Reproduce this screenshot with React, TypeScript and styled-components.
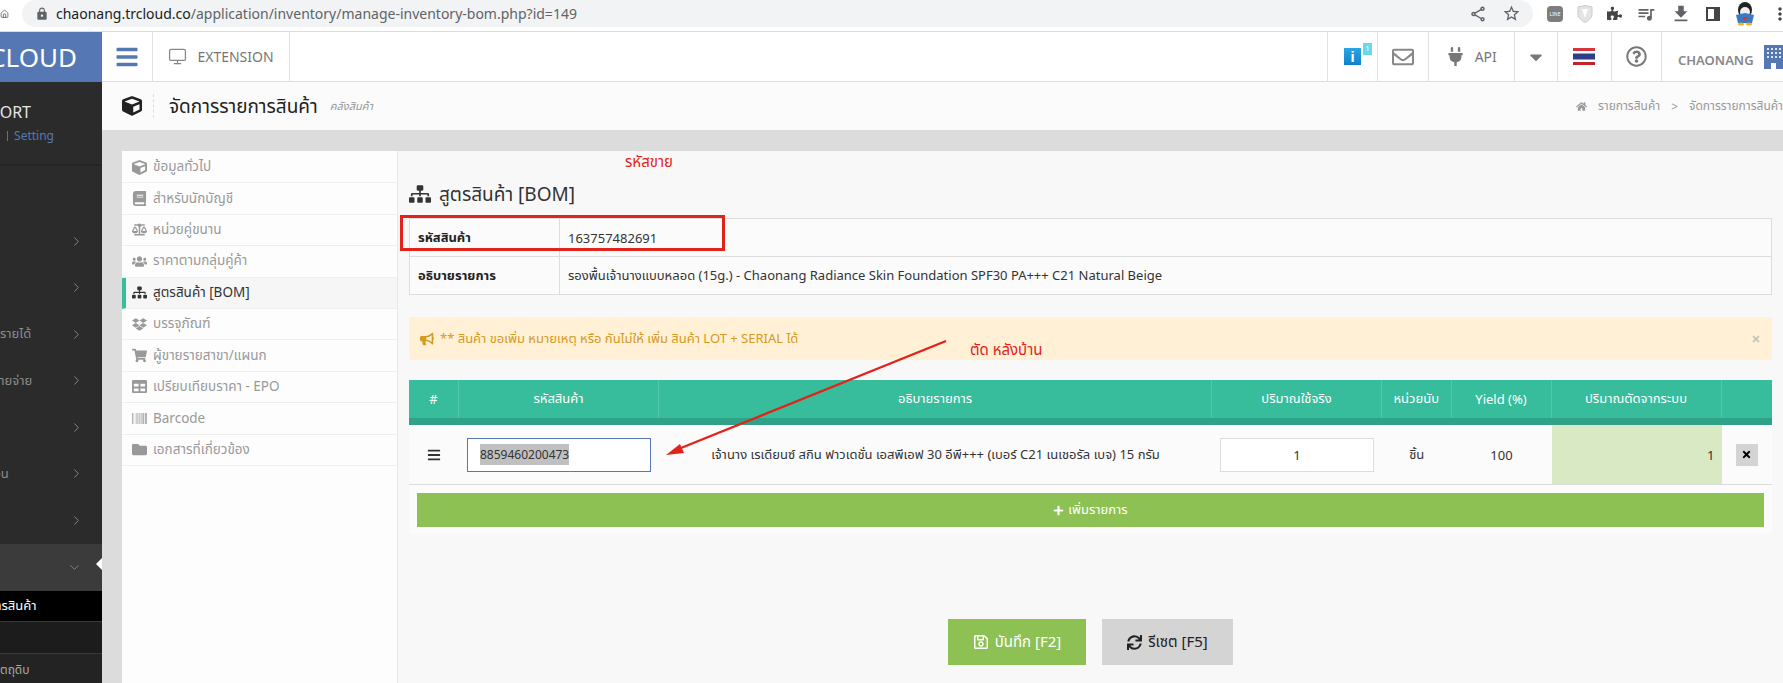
import React from "react";
import styled, { createGlobalStyle } from "styled-components";
import {
  FaBalanceScale,
  FaBarcode,
  FaBars,
  FaBook,
  FaBullhorn,
  FaCube,
  FaDropbox,
  FaFolder,
  FaHome,
  FaPlug,
  FaPlus,
  FaPuzzlePiece,
  FaShoppingCart,
  FaSitemap,
  FaSync,
  FaTable,
  FaTimes,
  FaUsers,
  FaCaretDown,
  FaRegEnvelope,
  FaRegQuestionCircle,
  FaRegSave,
} from "react-icons/fa";
import {
  MdFileDownload,
  MdLock,
  MdMoreVert,
  MdOutlineShare,
  MdQueueMusic,
  MdStarBorder,
} from "react-icons/md";
import { ChevronDown, ChevronRight, Home, Monitor } from "lucide-react";

const font = `"Noto Sans", "Noto Sans Thai", "Open Sans", sans-serif`;

const GlobalStyle = createGlobalStyle`
  html, body { margin: 0; padding: 0; background: #f8f8f8; }
  body { font-family: ${font}; color: #333; }
  * { box-sizing: border-box; }
`;

const navItems = [
  { icon: <FaCube />, label: "ข้อมูลทั่วไป" },
  { icon: <FaBook />, label: "สำหรับนักบัญชี" },
  { icon: <FaBalanceScale />, label: "หน่วยคู่ขนาน" },
  { icon: <FaUsers />, label: "ราคาตามกลุ่มคู่ค้า" },
  { icon: <FaSitemap />, label: "สูตรสินค้า [BOM]", active: true },
  { icon: <FaDropbox />, label: "บรรจุภัณฑ์" },
  { icon: <FaShoppingCart />, label: "ผู้ขายรายสาขา/แผนก" },
  { icon: <FaTable />, label: "เปรียบเทียบราคา - EPO" },
  { icon: <FaBarcode />, label: "Barcode" },
  { icon: <FaFolder />, label: "เอกสารที่เกี่ยวข้อง" },
];

const sideRows = [
  { label: "ข้อมูล", shift: -33 },
  { label: "", shift: 0 },
  { label: "รายได้", shift: 0 },
  { label: "รายจ่าย", shift: -7 },
  { label: "", shift: 0 },
  { label: "การเงิน", shift: -29 },
  { label: "", shift: 0 },
];

const headers = ["#", "รหัสสินค้า", "อธิบายรายการ", "ปริมาณใช้จริง", "หน่วยนับ", "Yield (%)", "ปริมาณตัดจากระบบ", ""];

const App = () => {
  return (
    <Page>
      <GlobalStyle />
      <ChromeBar>
        <HomeSlice>
          <Home size={20} strokeWidth={1.8} />
        </HomeSlice>
        <AddressPill>
          <MdLock size={14} color="#5f6368" />
          <Url>
            <strong>chaonang.trcloud.co</strong>/application/inventory/manage-inventory-bom.php?id=149
          </Url>
          <PillIcons>
            <MdOutlineShare size={18} />
            <MdStarBorder size={19} />
          </PillIcons>
        </AddressPill>
        <Extensions>
          <LineBadge>LINE</LineBadge>
          <svg width="16" height="18" viewBox="0 0 16 18">
            <path d="M1 2 L8 0.5 L15 2 V9 C15 13 11 16 8 17.5 C5 16 1 13 1 9 Z" fill="#e4e4e4" stroke="#c9c9c9" />
            <path d="M5 4 H11 L8 13 Z" fill="#fff" />
          </svg>
          <FaPuzzlePiece size={15} color="#444" />
          <MdQueueMusic size={20} color="#5f6368" />
          <MdFileDownload size={22} color="#5f6368" />
          <PanelIcon />
          <svg width="22" height="24" viewBox="0 0 22 24">
            <ellipse cx="11" cy="8" rx="7" ry="8" fill="#222" />
            <ellipse cx="11" cy="10" rx="5" ry="5" fill="#eee" />
            <path d="M2 13 L11 11 L20 13 L18 21 H4 Z" fill="#3a79c4" />
            <path d="M8 15 H14 L11 19 Z" fill="#d8382c" />
            <ellipse cx="7" cy="22" rx="3" ry="1.6" fill="#f2b01e" />
            <ellipse cx="15" cy="22" rx="3" ry="1.6" fill="#f2b01e" />
          </svg>
          <MdMoreVert size={20} color="#444" />
        </Extensions>
      </ChromeBar>

      <Body>
        <Sidebar>
          <Logo>
            <span>TRCLOUD</span>
          </Logo>
          <Profile>
            <CompanyName>SUPPORT</CompanyName>
            <SettingLine>
              <i />
              Setting
            </SettingLine>
          </Profile>
          <SideMenu>
            {sideRows.map((row, i) => (
              <SideRow key={i}>
                <SideLabel $shift={row.shift}>{row.label}</SideLabel>
                <ChevronRight size={15} strokeWidth={1.5} />
              </SideRow>
            ))}
            <SideActive>
              <ChevronDown size={15} strokeWidth={1.5} />
              <Notch />
            </SideActive>
            <SubRow $bg="#000" $color="#fff" $h={31}>
              <SideLabel $shift={-31}>รายการสินค้า</SideLabel>
            </SubRow>
            <SubRow $bg="#1c1c1c" $color="#aaa" $h={32} />
            <SubRow $bg="#232323" $color="#aaa" $h={33}>
              <SmallLabel>ตถุดิบ</SmallLabel>
            </SubRow>
          </SideMenu>
        </Sidebar>

        <MainColumn>
          <TopBar>
            <TopCell $w={51}>
              <FaBars size={24} color="#5578b4" />
            </TopCell>
            <TopCell $w={137}>
              <Monitor size={19} color="#888" strokeWidth={1.6} />
              <TopText>EXTENSION</TopText>
            </TopCell>
            <TopSpacer />
            <TopCell $w={50}>
              <InfoIcon>i</InfoIcon>
              <InfoBadge>1</InfoBadge>
            </TopCell>
            <TopCell $w={51}>
              <FaRegEnvelope size={22} color="#888" />
            </TopCell>
            <TopCell $w={85.5}>
              <FaPlug size={19} color="#777" />
              <TopText>API</TopText>
            </TopCell>
            <TopCell $w={43}>
              <FaCaretDown size={20} color="#777" />
            </TopCell>
            <TopCell $w={54.5}>
              <svg width="22" height="17" viewBox="0 0 22 17">
                <rect width="22" height="17" fill="#fff" />
                <rect width="22" height="3" fill="#d8363f" />
                <rect y="5.5" width="22" height="6" fill="#2d3f86" />
                <rect y="14" width="22" height="3" fill="#c1242c" />
              </svg>
            </TopCell>
            <TopCell $w={50}>
              <FaRegQuestionCircle size={21} color="#777" />
            </TopCell>
            <UserCell>
              <UserName>CHAONANG</UserName>
              <BuildingIcon>
                <svg width="24" height="24" viewBox="0 0 24 24">
                  <rect width="24" height="24" fill="#5578b4" />
                  {[4, 8, 12, 16, 20].map((x) =>
                    [3, 7, 11].map((y) => <rect key={`${x}-${y}`} x={x - 1} y={y} width="2" height="2" fill="#dde6f4" />)
                  )}
                  <rect x="7" y="18" width="5" height="6" fill="#fff" />
                </svg>
              </BuildingIcon>
            </UserCell>
          </TopBar>

          <SubHeader>
            <FaCube size={20} color="#222" />
            <PageTitle>จัดการรายการสินค้า</PageTitle>
            <PageSub>คลังสินค้า</PageSub>
            <Crumbs>
              <FaHome size={11} />
              <span>รายการสินค้า</span>
              <span>&gt;</span>
              <span>จัดการรายการสินค้า</span>
            </Crumbs>
          </SubHeader>

          <Band />

          <Workspace>
            <SideTabs>
              {navItems.map((item) => (
                <TabRow key={item.label} $active={item.active}>
                  {item.icon}
                  <span>{item.label}</span>
                </TabRow>
              ))}
            </SideTabs>

            <Content>
              <SectionTitle>
                <FaSitemap size={22} />
                สูตรสินค้า [BOM]
              </SectionTitle>

              <InfoTable>
                <InfoHead>รหัสสินค้า</InfoHead>
                <InfoValue>163757482691</InfoValue>
                <InfoHead>อธิบายรายการ</InfoHead>
                <InfoValue>รองพื้นเจ้านางแบบหลอด (15g.) - Chaonang Radiance Skin Foundation SPF30 PA+++ C21 Natural Beige</InfoValue>
              </InfoTable>

              <Alert>
                <FaBullhorn size={14} />
                <span>** สินค้า ขอเพิ่ม หมายเหตุ หรือ กันไม่ให้ เพิ่ม สินค้า LOT + SERIAL ได้</span>
                <AlertClose>
                  <FaTimes size={10} />
                </AlertClose>
              </Alert>

              <BomHead>
                {headers.map((h, i) => (
                  <HeadCell key={i}>{h}</HeadCell>
                ))}
              </BomHead>
              <BomPanel>
                <BomRow>
                  <BodyCell>
                    <FaBars size={14} color="#333" />
                  </BodyCell>
                  <BodyCell>
                    <CodeInput>
                      <mark>8859460200473</mark>
                    </CodeInput>
                  </BodyCell>
                  <DescCell>เจ้านาง เรเดียนซ์ สกิน ฟาวเดชั่น เอสพีเอฟ 30 อีพี+++ (เบอร์ C21 เนเชอรัล เบจ) 15 กรัม</DescCell>
                  <BodyCell>
                    <QtyInput>1</QtyInput>
                  </BodyCell>
                  <BodyCell>ชิ้น</BodyCell>
                  <BodyCell>100</BodyCell>
                  <DeductCell>1</DeductCell>
                  <BodyCell>
                    <RemoveButton>
                      <FaTimes size={11} />
                    </RemoveButton>
                  </BodyCell>
                </BomRow>
                <AddRow>
                  <FaPlus size={11} />
                  เพิ่มรายการ
                </AddRow>
              </BomPanel>

              <Actions>
                <ActionButton $bg="#8dc153" $color="#fff" $w={138}>
                  <FaRegSave size={16} />
                  บันทึก [F2]
                </ActionButton>
                <ActionButton $bg="#d4d4d4" $color="#222" $w={131}>
                  <FaSync size={15} />
                  รีเซต [F5]
                </ActionButton>
              </Actions>
            </Content>
          </Workspace>
        </MainColumn>
      </Body>

      <Markup viewBox="0 0 1783 683" width="1783" height="683">
        <rect x="401.5" y="216.5" width="322" height="33" fill="none" stroke="#e2231a" strokeWidth="3" />
        <line x1="946" y1="341" x2="676" y2="450" stroke="#e2231a" strokeWidth="2.4" />
        <polygon points="666,455 680,444 684,453" fill="#e2231a" />
      </Markup>
      <RedNote $x={625} $y={150}>รหัสขาย</RedNote>
      <RedNote $x={970} $y={338}>ตัด หลังบ้าน</RedNote>
    </Page>
  );
};

export default App;

const Page = styled.div`
  position: relative;
  width: 1783px;
  height: 683px;
  overflow: hidden;
  display: flex;
  flex-direction: column;
`;

const ChromeBar = styled.div`
  height: 32px;
  flex: none;
  display: flex;
  background: #fff;
  border-bottom: 1px solid #dadce0;
`;

const HomeSlice = styled.div`
  width: 22px;
  display: flex;
  align-items: flex-start;
  justify-content: flex-end;
  padding: 4px 13px 0 0;
  color: #444;
`;

const AddressPill = styled.div`
  width: 1511px;
  height: 27px;
  background: #f1f3f4;
  border-radius: 0 14px 14px 14px;
  border-top-left-radius: 14px;
  margin-top: 0;
  display: flex;
  align-items: center;
  padding: 0 12px 0 13px;
`;

const Url = styled.div`
  margin-left: 7px;
  font-size: 14px;
  color: #5f6368;
  white-space: nowrap;

  strong {
    color: #202124;
    font-weight: 400;
  }
`;

const PillIcons = styled.div`
  margin-left: auto;
  display: flex;
  align-items: center;
  gap: 15px;
  color: #5f6368;
`;

const Extensions = styled.div`
  flex: 1;
  height: 27px;
  display: flex;
  align-items: center;
  justify-content: space-between;
  padding: 0 0 0 14px;
  margin-right: -7px;
`;

const LineBadge = styled.div`
  width: 16px;
  height: 16px;
  border-radius: 4px;
  background: #7d7d7d;
  color: #fff;
  font-size: 5px;
  display: flex;
  align-items: center;
  justify-content: center;
`;

const PanelIcon = styled.div`
  width: 14px;
  height: 14px;
  border: 2px solid #444;
  border-right-width: 6px;
`;

const Body = styled.div`
  flex: 1;
  display: flex;
  min-height: 0;
`;

const Sidebar = styled.aside`
  width: 102px;
  flex: none;
  background: #2b2b2b;
  overflow: hidden;
  display: flex;
  flex-direction: column;
`;

const Logo = styled.div`
  height: 50px;
  flex: none;
  background: #5578b4;
  color: #fff;
  font-size: 26px;
  display: flex;
  align-items: center;
  justify-content: flex-end;
  padding-right: 25px;
  white-space: nowrap;
`;

const Profile = styled.div`
  height: 84px;
  flex: none;
  border-bottom: 2px solid #252525;
  display: flex;
  flex-direction: column;
  align-items: flex-end;
  padding: 19px 71px 0 0;
  white-space: nowrap;
`;

const CompanyName = styled.div`
  color: #e5e5e5;
  font-size: 16px;
  line-height: 22px;
`;

const SettingLine = styled.div`
  margin-top: 5px;
  color: #5578b4;
  font-size: 12px;
  line-height: 16px;
  margin-right: -23px;
  display: flex;
  align-items: center;
  gap: 6px;

  i {
    width: 1px;
    height: 10px;
    background: #a55;
  }
`;

const SideMenu = styled.nav`
  flex: 1;
  padding-top: 52px;
  display: flex;
  flex-direction: column;
`;

const SideRow = styled.div`
  height: 46.5px;
  flex: none;
  display: flex;
  align-items: center;
  justify-content: space-between;
  padding-right: 18px;
  color: #8b8b8b;
  white-space: nowrap;
  margin-top: ${0}px;
`;

const SideLabel = styled.span<{ $shift: number }>`
  margin-left: ${(p) => p.$shift}px;
  font-size: 13px;
`;

const SideActive = styled.div`
  position: relative;
  height: 47px;
  flex: none;
  background: #3b3b3b;
  color: #888;
  display: flex;
  align-items: center;
  justify-content: flex-end;
  padding-right: 20px;
`;

const Notch = styled.div`
  position: absolute;
  right: 0;
  top: 14px;
  border: 6px solid transparent;
  border-right-color: #fff;
  border-left-width: 0;
`;

const SubRow = styled.div<{ $bg: string; $color: string; $h: number }>`
  height: ${(p) => p.$h}px;
  flex: none;
  background: ${(p) => p.$bg};
  color: ${(p) => p.$color};
  border-bottom: 1px solid #3a3a3a;
  display: flex;
  align-items: center;
  white-space: nowrap;
`;

const SmallLabel = styled.span`
  font-size: 12px;
`;

const MainColumn = styled.div`
  flex: 1;
  min-width: 0;
  display: flex;
  flex-direction: column;
`;

const TopBar = styled.header`
  height: 50px;
  flex: none;
  display: flex;
  background: #fff;
  border-bottom: 1px solid #dedede;
`;

const TopCell = styled.div<{ $w: number }>`
  position: relative;
  width: ${(p) => p.$w}px;
  flex: none;
  display: flex;
  align-items: center;
  justify-content: center;
  gap: 10px;
  border-right: 1px solid #e2e2e2;
`;

const TopText = styled.span`
  font-size: 14px;
  color: #777;
`;

const TopSpacer = styled.div`
  flex: 1;
  border-right: 1px solid #e2e2e2;
`;

const InfoIcon = styled.div`
  width: 17px;
  height: 17px;
  background: linear-gradient(#2ba6e0, #0b83cc);
  color: #fff;
  font: bold 15px/17px "Liberation Sans", sans-serif;
  text-align: center;
`;

const InfoBadge = styled.div`
  position: absolute;
  top: 11px;
  right: 5px;
  width: 9px;
  height: 12px;
  background: #6ad8ea;
  color: #fff;
  font-size: 7px;
  line-height: 12px;
  text-align: center;
`;

const UserCell = styled.div`
  width: 121px;
  flex: none;
  display: flex;
  align-items: center;
  padding-left: 16px;
  overflow: hidden;
`;

const UserName = styled.span`
  font-size: 13px;
  font-weight: 600;
  color: #888;
  white-space: nowrap;
  margin-top: 6px;
`;

const BuildingIcon = styled.div`
  margin-left: 10px;
  flex: none;
  height: 24px;
`;

const SubHeader = styled.div`
  height: 48px;
  flex: none;
  background: #fbfbfb;
  display: flex;
  align-items: center;
  padding-left: 20px;
`;

const PageTitle = styled.h1`
  margin: 0 0 0 11px;
  padding-left: 15px;
  border-left: 1px dashed #ddd;
  font-size: 19px;
  font-weight: 400;
  color: #222;
  line-height: 24px;
`;

const PageSub = styled.span`
  margin-left: 12px;
  font-size: 11px;
  font-style: italic;
  color: #999;
`;

const Crumbs = styled.div`
  margin-left: auto;
  display: flex;
  align-items: center;
  gap: 11px;
  font-size: 12px;
  color: #999;
  white-space: nowrap;
`;

const Band = styled.div`
  height: 21px;
  flex: none;
  background: #dcdcdc;
`;

const Workspace = styled.div`
  flex: 1;
  min-height: 0;
  display: flex;
  background: #dcdcdc;
  padding-left: 20px;
`;

const SideTabs = styled.div`
  width: 276px;
  flex: none;
  background: #fdfdfd;
  border-right: 1px solid #e8e8e8;
  padding-top: 1px;
`;

const TabRow = styled.div<{ $active?: boolean }>`
  height: 31.4px;
  display: flex;
  align-items: center;
  gap: 6px;
  padding-left: ${(p) => (p.$active ? 6 : 10)}px;
  font-size: 13.5px;
  white-space: nowrap;
  color: ${(p) => (p.$active ? "#333" : "#999")};
  background: ${(p) => (p.$active ? "#f6f6f6" : "transparent")};
  border-left: ${(p) => (p.$active ? "4px solid #37bd9b" : "none")};
  border-bottom: 1px solid #efefef;

  svg {
    font-size: 15px;
    flex: none;
  }
`;

const Content = styled.main`
  flex: 1;
  min-width: 0;
  background: #f8f8f8;
  padding: 30px 11px 0 11px;
`;

const SectionTitle = styled.h2`
  height: 37px;
  margin: 0;
  display: flex;
  align-items: flex-start;
  gap: 8px;
  font-size: 19px;
  line-height: 26px;
  font-weight: 400;
  color: #333;

  svg {
    margin-top: 2px;
  }
`;

const InfoTable = styled.div`
  display: grid;
  grid-template-columns: 150px 1fr;
  grid-auto-rows: 38px;
  background: #fbfbfb;
  border: 1px solid #ddd;
  border-bottom: none;
`;

const InfoHead = styled.div`
  display: flex;
  align-items: center;
  padding-left: 8px;
  font-size: 13px;
  font-weight: 700;
  color: #222;
  border-right: 1px solid #ddd;
  border-bottom: 1px solid #ddd;
`;

const InfoValue = styled.div`
  display: flex;
  align-items: center;
  padding-left: 8px;
  font-size: 13px;
  color: #333;
  border-bottom: 1px solid #ddd;
`;

const Alert = styled.div`
  position: relative;
  height: 43px;
  margin-top: 22px;
  background: #fff0d6;
  border-radius: 3px;
  display: flex;
  align-items: center;
  gap: 6px;
  padding: 0 11px;
  font-size: 13px;
  color: #d59a1f;
`;

const AlertClose = styled.span`
  margin-left: auto;
  color: #c9c4b8;
  display: flex;
`;

const columns = "50px 200px 553px 170px 69.5px 100px 170px 50.5px";

const BomHead = styled.div`
  margin-top: 20px;
  display: grid;
  grid-template-columns: ${columns};
  height: 45px;
  background: #37bd9b;
  border-bottom: 7px solid #2fa287;
`;

const HeadCell = styled.div`
  display: flex;
  align-items: center;
  justify-content: center;
  color: #fff;
  font-size: 13px;
  border-right: 1px solid #4fc9aa;
  white-space: nowrap;

  &:last-child {
    border-right: none;
  }
`;

const BomPanel = styled.div`
  height: 109px;
  background: #fbfbfb;
`;

const BomRow = styled.div`
  display: grid;
  grid-template-columns: ${columns};
  height: 60px;
  border-bottom: 1px solid #ddd;
`;

const BodyCell = styled.div`
  display: flex;
  align-items: center;
  justify-content: center;
  font-size: 13px;
  color: #333;
`;

const DescCell = styled(BodyCell)`
  text-align: center;
  padding: 0 18px;
  line-height: 23px;
`;

const CodeInput = styled.div`
  width: 184px;
  height: 34px;
  background: #fff;
  border: 1px solid #5578b4;
  display: flex;
  align-items: center;
  padding-left: 12px;
  font-size: 12px;

  mark {
    background: #c0c0c0;
    color: #333;
    padding: 2px 0;
  }
`;

const QtyInput = styled.div`
  width: 154px;
  height: 34px;
  background: #fff;
  border: 1px solid #ddd;
  display: flex;
  align-items: center;
  justify-content: center;
`;

const DeductCell = styled(BodyCell)`
  justify-content: flex-end;
  padding-right: 7px;
  background: #d8e9c4;
`;

const RemoveButton = styled.div`
  width: 22px;
  height: 22px;
  background: #d4d4d4;
  color: #000;
  display: flex;
  align-items: center;
  justify-content: center;
`;

const AddRow = styled.div`
  height: 34px;
  margin: 8px 8px 0;
  background: #8dc153;
  color: #fff;
  font-size: 13px;
  display: flex;
  align-items: center;
  justify-content: center;
  gap: 4px;
`;

const Actions = styled.div`
  margin-top: 85px;
  display: flex;
  justify-content: center;
  gap: 16px;
`;

const ActionButton = styled.div<{ $bg: string; $color: string; $w: number }>`
  width: ${(p) => p.$w}px;
  height: 46px;
  background: ${(p) => p.$bg};
  color: ${(p) => p.$color};
  font-size: 15px;
  display: flex;
  align-items: center;
  justify-content: center;
  gap: 6px;
`;

const Markup = styled.svg`
  position: absolute;
  left: 0;
  top: 0;
  pointer-events: none;
`;

const RedNote = styled.div<{ $x: number; $y: number }>`
  position: absolute;
  left: ${(p) => p.$x}px;
  top: ${(p) => p.$y}px;
  color: #e2231a;
  font-size: 15px;
  line-height: 22px;
  white-space: nowrap;
`;
